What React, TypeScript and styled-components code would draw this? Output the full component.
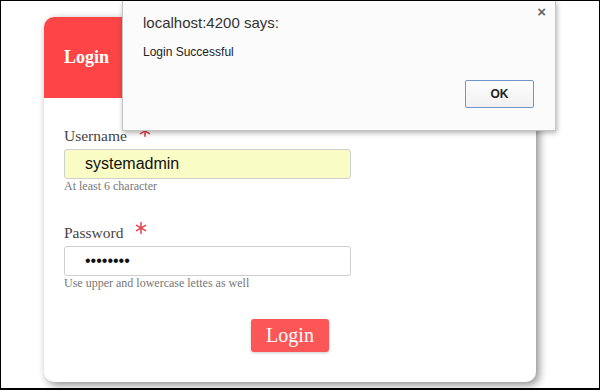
import React from "react";
import styled, { createGlobalStyle } from "styled-components";

const Global = createGlobalStyle`
  html, body { margin: 0; padding: 0; background: #fff; }
  * { box-sizing: border-box; }
`;

const Frame = styled.div`
  position: relative;
  width: 600px;
  height: 390px;
  border: 1px solid #000;
  border-bottom-width: 2px;
  overflow: hidden;
  background: #fff;
  padding: 16px 0 0 43px;
`;

const Card = styled.div`
  width: 492px;
  height: 365px;
  border-radius: 10px;
  background: #fff;
  box-shadow: 3px 3px 9px rgba(0, 0, 0, 0.45);
  display: flex;
  flex-direction: column;
  overflow: hidden;
`;

const Header = styled.div`
  height: 81px;
  background: #fd4446;
  display: flex;
  align-items: center;
  padding-left: 20px;
  font-family: "Liberation Serif", serif;
  font-weight: bold;
  font-size: 18px;
  color: #fff;
`;

const Body = styled.div`
  display: flex;
  flex-direction: column;
  padding: 28px 20px 0 20px;
  gap: 30px;
`;

const Group = styled.div`
  display: flex;
  flex-direction: column;
`;

const LabelRow = styled.div`
  display: flex;
  align-items: center;
  height: 20px;
  margin-bottom: 3px;
  gap: 12px;
`;

const Label = styled.label`
  font-family: "Liberation Serif", serif;
  font-size: 15.5px;
  color: #444;
`;

const Star = styled.svg`
  width: 12px;
  height: 12px;
  margin-top: -10px;
`;

const Field = styled.input<{ $filled?: boolean }>`
  width: 287px;
  height: 30px;
  border: 1px solid #cfcfcf;
  border-radius: 3px;
  background: ${(p) => (p.$filled ? "#fafcc5" : "#fff")};
  padding: 0 0 0 20px;
  font-family: "Liberation Sans", Arial, sans-serif;
  font-size: 16px;
  color: #111;
  outline: none;
`;

const Help = styled.div`
  font-family: "Liberation Serif", serif;
  font-size: 12px;
  line-height: 14px;
  color: #777;
`;

const ButtonRow = styled.div`
  display: flex;
  justify-content: center;
  margin-top: -1px;
`;

const LoginButton = styled.button`
  width: 78px;
  height: 33px;
  border: none;
  border-radius: 3px;
  background: #fc5657;
  color: #fff;
  font-family: "Liberation Serif", serif;
  font-size: 20px;
  box-shadow: 0 1px 3px rgba(0, 0, 0, 0.2);
  padding: 0;
`;

const Dialog = styled.div`
  position: absolute;
  left: 121px;
  top: 0;
  width: 434px;
  height: 130px;
  background: #fbfbfb;
  border: 1px solid #c4c4c4;
  border-top: none;
  box-shadow: 1px 2px 5px rgba(0, 0, 0, 0.3);
  display: flex;
  flex-direction: column;
  padding: 12px 20px 0 20px;
  font-family: "Liberation Sans", Arial, sans-serif;
`;

const DialogTitle = styled.div`
  font-size: 15px;
  color: #333;
  line-height: 20px;
`;

const DialogText = styled.div`
  font-size: 12px;
  color: #222;
  margin-top: 12px;
  line-height: 14px;
`;

const Close = styled.div`
  position: absolute;
  right: 9px;
  top: 2px;
  font-size: 15px;
  font-weight: bold;
  color: #666;
`;

const DialogActions = styled.div`
  display: flex;
  justify-content: flex-end;
  margin-top: 21px;
  padding-right: 1px;
`;

const OkButton = styled.button`
  width: 69px;
  height: 28px;
  border: 1px solid #7394c8;
  border-radius: 2px;
  background: linear-gradient(#fdfdfd, #f1f1f1);
  font-family: "Liberation Sans", Arial, sans-serif;
  font-weight: bold;
  font-size: 12px;
  color: #222;
  padding: 0;
`;

const Asterisk = () => (
  <Star viewBox="0 0 12 12">
    <g stroke="#e8434b" strokeWidth="1.6" strokeLinecap="round">
      <line x1="6" y1="0.8" x2="6" y2="11.2" />
      <line x1="1.5" y1="3.4" x2="10.5" y2="8.6" />
      <line x1="1.5" y1="8.6" x2="10.5" y2="3.4" />
    </g>
  </Star>
);

export default function App() {
  return (
    <>
      <Global />
      <Frame>
        <Card>
          <Header>Login</Header>
          <Body>
            <Group>
              <LabelRow>
                <Label>Username</Label>
                <Asterisk />
              </LabelRow>
              <Field $filled readOnly defaultValue="systemadmin" />
              <Help>At least 6 character</Help>
            </Group>
            <Group>
              <LabelRow>
                <Label>Password</Label>
                <Asterisk />
              </LabelRow>
              <Field type="password" readOnly defaultValue="password" />
              <Help>Use upper and lowercase lettes as well</Help>
            </Group>
            <ButtonRow>
              <LoginButton>Login</LoginButton>
            </ButtonRow>
          </Body>
        </Card>
        <Dialog>
          <Close>×</Close>
          <DialogTitle>localhost:4200 says:</DialogTitle>
          <DialogText>Login Successful</DialogText>
          <DialogActions>
            <OkButton>OK</OkButton>
          </DialogActions>
        </Dialog>
      </Frame>
    </>
  );
}
